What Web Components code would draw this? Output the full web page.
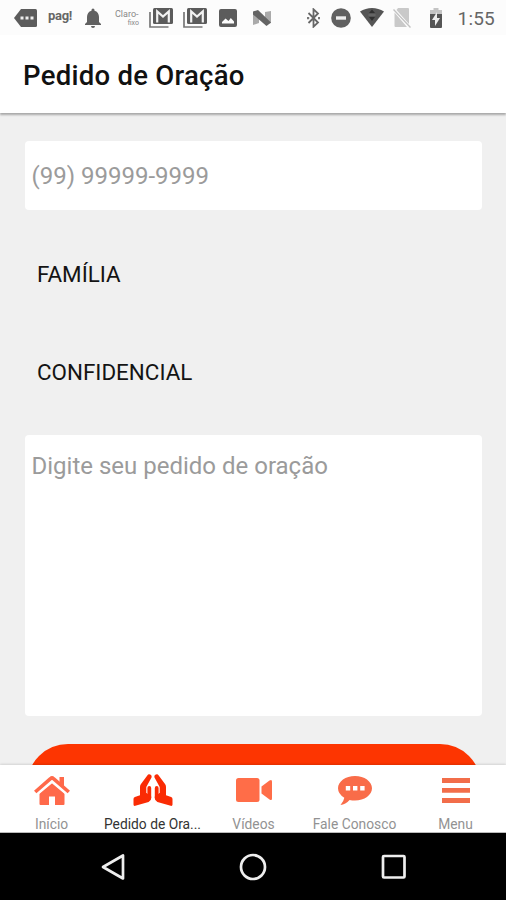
<!DOCTYPE html>
<html lang="pt-BR">
<head>
<meta charset="utf-8">
<meta name="viewport" content="width=device-width, initial-scale=1">
<title>Pedido de Oração</title>
<style>
  html, body { margin: 0; height: 100%; }
  body { font-family: Roboto, sans-serif; background: #f0f0f0; overflow: hidden; }
</style>
</head>
<body>
<prayer-app></prayer-app>
<script>
const hand = `<path fill="#fa2b04" d="M14.300 1.500Q15.300-.2 17.200.6t1.300 2.800L13.300 13v7.500H7V13q0-1.500.8-2.800z"/><path fill="none" stroke="#fa2b04" stroke-width="3.800" stroke-linecap="round" d="M16.300 14V24"/><path fill="#fa2b04" d="M7 19h6.500l4.700 3.500v1.500q0 3-2.600 3.900L2.300 31.800Q.5 32.200.5 30.500V25q0-1.500 1.400-2L7 21.200z"/>`;

const icons = {
  tag: ["0 0 23 18", `<path fill="#5c5c5c" d="M7 0h14.500Q23 0 23 1.500v15Q23 18 21.500 18H7L0 9z"/><path fill="#eee" d="M6.500 7.500h3v3h-3zM11.500 7.500h3v3h-3zM16.500 7.500h3v3h-3z"/>`],
  bell: ["0 0 16 20", `<path fill="#616161" d="M8 20a2 2 0 0 0 2-2H6a2 2 0 0 0 2 2zm6-6V9c0-3-1.600-5.600-4.500-6.300V2a1.500 1.500 0 0 0-3 0v.7C3.600 3.400 2 6 2 9v5l-2 2v1h16v-1z"/>`],
  gmail: ["0 0 24 20", `<path fill="none" stroke="#777" stroke-width="1.700" d="M1 4v15h18.500"/><path fill="#5b5b5b" d="M5.500 0h17Q24 0 24 1.500v13q0 1.500-1.500 1.500h-17Q4 16 4 14.500v-13Q4 0 5.500 0z"/><path fill="none" stroke="#f2f2f2" stroke-width="2.200" d="M8.200 14.500V3.500l5.800 5 5.800-5v11"/>`],
  picture: ["0 0 18 18", `<path fill="#5c5c5c" fill-rule="evenodd" d="M2 0h14q2 0 2 2v14q0 2-2 2H2q-2 0-2-2V2Q0 0 2 0zM3 14.500h12v-2L11.800 9l-2.300 3L6.500 9.500 3 13z"/>`],
  nougat: ["0 0 20 16", `<path fill="#aaa" d="M1 2l6 2v9l-6 2zM13 2l6-1v12l-6 2z"/><path fill="#646464" d="M1 1.500L6 0l13 12.500L14.500 16 1 4.500z"/>`],
  bluetooth: ["0 0 13 20", `<path fill="none" stroke="#666" stroke-width="1.800" d="M1.500 5l9.500 9.500-4.500 4.200V1.300L11 5.500 1.500 15"/><path fill="#777" d="M0 9h2.200v2.200H0zM11 9h2.200v2.200H11z"/>`],
  dnd: ["0 0 20 20", `<circle cx="10" cy="10" r="9.800" fill="#606060"/><path fill="#eee" d="M5 8.300h10v3.400H5z"/>`],
  wifi: ["0 0 24 19", `<path fill="#555" d="M12 19L0 3.500Q5.500 0 12 0t12 3.500z"/><path fill="#303030" d="M12 1.500l3 3.500H9zM12 13L9 9h6z"/><path stroke="#777" d="M8.500 7h7"/>`],
  sim: ["0 0 18 20", `<path fill="#c9c9c9" d="M5 0h10q1 0 1 1v15L3.500 2zM1.500 4.500L14 19H2.500q-1 0-1-1z"/><path fill="none" stroke="#c2c2c2" stroke-width="1.300" d="M.5 1.500l17 18"/>`],
  battery: ["0 0 14 20", `<path fill="#c4c4c4" d="M4.500 0h5v2H13v5H1V2h3.500z"/><path fill="#555" d="M1 6h12v13q0 1-1 1H2q-1 0-1-1z"/><path fill="#eee" d="M8 4v6h3l-5 8v-6H3z"/>`],
  home: ["0 0 36 29", `<path fill="#ff694a" d="M18 6.500L30.500 17v11q0 1-1 1H21v-8.500h-6V29H6.500q-1 0-1-1V17z"/><path fill="none" stroke="#fff" stroke-width="6" d="M1.200 17.500L18 3.500l16.800 14"/><path fill="none" stroke="#ff694a" stroke-width="3.600" d="M1.200 16L16.500 2.700q1.500-1.400 3 0L34.800 16"/><path fill="#ff694a" d="M25.500 1H30v10l-4.500-4z"/>`],
  pray: ["0 0 40 32", `${hand}<g transform="matrix(-1 0 0 1 40 0)">${hand}</g>`],
  video: ["0 0 36 24", `<rect width="23.500" height="24" rx="2.500" fill="#ff6d48"/><path fill="#ff6d48" d="M25.500 8.500l8-6Q36 1 36 3.500v17q0 2.500-2.500 1l-8-6z"/>`],
  chat: ["0 0 34 29", `<path fill="#f96c49" d="M17 0c9.400 0 17 5.500 17 12.300s-7.600 12.200-17 12.200q-2.800 0-5.400-.6Q7.500 28.500 2.500 29q3.200-3.400 3.800-7.200Q0 18 0 12.300C0 5.500 7.600 0 17 0z"/><path fill="#fff" d="M7.800 10h4.400v4.500H7.800zM15 10h4.400v4.500H15zM22.200 10h4.400v4.500h-4.400z"/>`],
  menu: ["0 0 28 25", `<path fill="#f26d4a" d="M0 0h28v5H0zM0 10h28v4.800H0zM0 20h28v5H0z"/>`],
  back: ["0 0 24 28", `<path fill="none" stroke="#eee" stroke-width="2.700" stroke-linejoin="round" d="M22 2.500v23L2 14z"/>`],
  circle: ["0 0 28 28", `<circle cx="14" cy="14" r="12" fill="none" stroke="#eee" stroke-width="2.700"/>`],
  square: ["0 0 26 26", `<rect x="2" y="2" width="21.500" height="21.500" rx="1" fill="none" stroke="#eee" stroke-width="2.700"/>`]
};

class AppIcon extends HTMLElement {
  constructor() {
    super();
    this.attachShadow({ mode: "open" });
  }

  connectedCallback() {
    const [box, shape] = icons[this.getAttribute("name")];
    const [, , width, height] = box.split(" ");
    this.shadowRoot.innerHTML = `
      <style>
        :host { display: block; flex: none; width: ${width}px; height: ${height}px; }
        svg { display: block; }
      </style>
      <svg width="${width}" height="${height}" viewBox="${box}" aria-hidden="true">${shape}</svg>
    `;
  }
}

class StatusBar extends HTMLElement {
  constructor() {
    super();
    this.attachShadow({ mode: "open" }).innerHTML = `
      <style>
        :host { display: flex; align-items: center; justify-content: space-between; height: 35px; padding: 0 11px 0 14px; background: #fcfcfc; color: #666; box-sizing: border-box; }
        div { display: flex; align-items: center; gap: 11px; }
        .pag { font-size: 13px; line-height: 18px; font-weight: 700; width: 26px; margin-top: -3px; letter-spacing: -.3px; }
        .claro { display: flex; flex-direction: column; font-size: 9px; line-height: 10px; width: 24px; margin: 1px 0 0 3px; color: #888; }
        .claro span + span { font-size: 7px; text-align: right; line-height: 8px; }
        .time { font-size: 19px; letter-spacing: .2px; margin-left: 4px; margin-top: 1px; }
      </style>
      <div>
        <app-icon name="tag"></app-icon>
        <span class="pag">pag!</span>
        <app-icon name="bell"></app-icon>
        <span class="claro"><span>Claro-</span><span>fixo</span></span>
        <app-icon name="gmail" style="margin-left:-1px"></app-icon>
        <app-icon name="gmail" style="margin-left:-1px"></app-icon>
        <app-icon name="picture" style="margin-left:1px"></app-icon>
        <app-icon name="nougat" style="margin-left:4px"></app-icon>
      </div>
      <div>
        <app-icon name="bluetooth" style="margin-left:-3px"></app-icon>
        <app-icon name="dnd"></app-icon>
        <app-icon name="wifi" style="margin-left:-2px"></app-icon>
        <app-icon name="sim" style="margin-left:-2px"></app-icon>
        <app-icon name="battery" style="margin-left:7px"></app-icon>
        <span class="time">1:55</span>
      </div>
    `;
  }
}

class PageHeader extends HTMLElement {
  constructor() {
    super();
    this.attachShadow({ mode: "open" }).innerHTML = `
      <style>
        :host { display: flex; align-items: center; height: 78px; padding: 3px 23px 0; box-sizing: border-box; background: #fff; color: #111; font-size: 27.5px; font-weight: 500; letter-spacing: .27px; box-shadow: 0 2px 2px rgba(0,0,0,.3); position: relative; }
      </style>
      <slot></slot>
    `;
  }
}

class FormField extends HTMLElement {
  constructor() {
    super();
    this.attachShadow({ mode: "open" }).innerHTML = `
      <style>
        :host { display: block; box-sizing: border-box; height: 69px; padding: 21px 6.500px; border-radius: 4px; background: #fff; color: #9b9b9b; font-size: 24px; line-height: 29px; }
        :host([multiline]) { height: 281px; padding-top: 17px; }
        :host([plain]) { height: auto; padding: 0 12px; background: none; color: #141414; font-size: 22.4px; line-height: 28px; }
      </style>
      <slot></slot>
    `;
  }
}

class TabItem extends HTMLElement {
  constructor() {
    super();
    this.attachShadow({ mode: "open" });
  }

  connectedCallback() {
    this.shadowRoot.innerHTML = `
      <style>
        :host { display: flex; flex-direction: column; align-items: center; flex: 1; color: #929292; font-size: 13.8px; }
        :host([active]) { color: #333; }
        .icon { flex: none; height: 50px; display: flex; align-items: center; }
        span { flex: none; line-height: 18px; white-space: nowrap; }
      </style>
      <div class="icon"><app-icon name="${this.getAttribute("icon")}"></app-icon></div>
      <span><slot></slot></span>
    `;
  }
}

class TabBar extends HTMLElement {
  constructor() {
    super();
    this.attachShadow({ mode: "open" }).innerHTML = `
      <style>
        :host { display: flex; height: 68px; padding-left: 1px; background: #fff; box-sizing: border-box; border-bottom: 1px solid #bbb; box-shadow: 0 -1px 2px rgba(0,0,0,.12); position: relative; }
      </style>
      <slot></slot>
    `;
  }
}

class SystemNav extends HTMLElement {
  constructor() {
    super();
    this.attachShadow({ mode: "open" }).innerHTML = `
      <style>
        :host { display: flex; align-items: center; justify-content: space-between; height: 67px; padding: 0 99px 0 101px; box-sizing: border-box; background: #000; position: relative; }
      </style>
      <app-icon name="back"></app-icon>
      <app-icon name="circle"></app-icon>
      <app-icon name="square"></app-icon>
    `;
  }
}

class PrayerApp extends HTMLElement {
  constructor() {
    super();
    this.attachShadow({ mode: "open" }).innerHTML = `
      <style>
        :host { display: flex; flex-direction: column; height: 900px; }
        main { flex: 1; min-height: 0; overflow: hidden; padding: 28px 24px 0 25px; background: #f0f0f0; }
        .family { margin-top: 50px; }
        .private { margin-top: 70px; }
        .request { margin-top: 49px; }
        .send { display: block; width: calc(100% - 3px); height: 82px; margin: 28px 1px 0 2px; border: 0; border-radius: 41px; background: #fd3501; }
      </style>
      <status-bar></status-bar>
      <page-header>Pedido de Oração</page-header>
      <main>
        <form-field>(99) 99999-9999</form-field>
        <form-field plain class="family">FAMÍLIA</form-field>
        <form-field plain class="private">CONFIDENCIAL</form-field>
        <form-field multiline class="request">Digite seu pedido de oração</form-field>
        <button class="send"></button>
      </main>
      <tab-bar>
        <tab-item icon="home">Início</tab-item>
        <tab-item icon="pray" active>Pedido de Ora...</tab-item>
        <tab-item icon="video">Vídeos</tab-item>
        <tab-item icon="chat">Fale Conosco</tab-item>
        <tab-item icon="menu">Menu</tab-item>
      </tab-bar>
      <system-nav></system-nav>
    `;
  }
}

customElements.define("app-icon", AppIcon);
customElements.define("status-bar", StatusBar);
customElements.define("page-header", PageHeader);
customElements.define("form-field", FormField);
customElements.define("tab-item", TabItem);
customElements.define("tab-bar", TabBar);
customElements.define("system-nav", SystemNav);
customElements.define("prayer-app", PrayerApp);
</script>
</body>
</html>
